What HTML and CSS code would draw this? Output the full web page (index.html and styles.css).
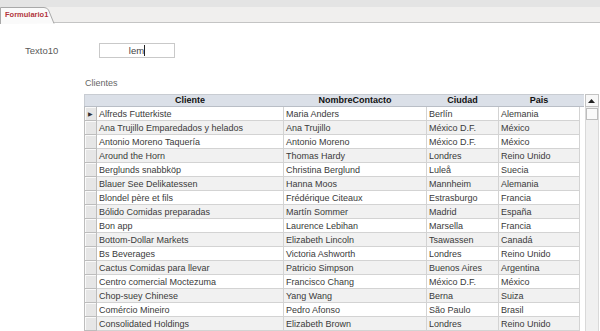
FILE: index.html
```html
<!DOCTYPE html>
<html lang="es">
<head>
    <meta charset="UTF-8">
    <title>Formulario1</title>
    <link rel="stylesheet" href="styles.css">
</head>
<body>

    <div class="top-band"></div>
    <div class="tab-strip">
        <div class="tab">
            <svg class="tab-shape" width="56" height="17" viewBox="0 0 56 17">
                <path d="M0.5 17 V0.5 H44 Q47 0.5 48.5 3 L54 16.5" fill="#fafafa" stroke="#a9a9a9"/>
            </svg>
            <span class="tab-title">Formulario1</span>
        </div>
    </div>

    <div class="form-body">
        <div class="field-row">
            <label for="texto10">Texto10</label>
            <div class="text-box" id="texto10">lem<span class="caret"></span></div>
        </div>

        <div class="sub-title">Clientes</div>

        <div class="datasheet">
            <table class="grid">
                <colgroup>
                    <col class="c-sel">
                    <col class="c-cliente">
                    <col class="c-contacto">
                    <col class="c-ciudad">
                    <col class="c-pais">
                    <col class="c-pad">
                </colgroup>
                <thead>
                    <tr>
                        <th></th>
                        <th>Cliente</th>
                        <th>NombreContacto</th>
                        <th>Ciudad</th>
                        <th>Pais</th>
                        <th></th>
                    </tr>
                </thead>
                <tbody>
                    <tr><td class="sel current">&#9654;</td><td>Alfreds Futterkiste</td><td>Maria Anders</td><td>Berlín</td><td>Alemania</td><td class="pad"></td></tr>
                    <tr><td class="sel"></td><td>Ana Trujillo Emparedados y helados</td><td>Ana Trujillo</td><td>México D.F.</td><td>México</td><td class="pad"></td></tr>
                    <tr><td class="sel"></td><td>Antonio Moreno Taquería</td><td>Antonio Moreno</td><td>México D.F.</td><td>México</td><td class="pad"></td></tr>
                    <tr><td class="sel"></td><td>Around the Horn</td><td>Thomas Hardy</td><td>Londres</td><td>Reino Unido</td><td class="pad"></td></tr>
                    <tr><td class="sel"></td><td>Berglunds snabbköp</td><td>Christina Berglund</td><td>Luleå</td><td>Suecia</td><td class="pad"></td></tr>
                    <tr><td class="sel"></td><td>Blauer See Delikatessen</td><td>Hanna Moos</td><td>Mannheim</td><td>Alemania</td><td class="pad"></td></tr>
                    <tr><td class="sel"></td><td>Blondel père et fils</td><td>Frédérique Citeaux</td><td>Estrasburgo</td><td>Francia</td><td class="pad"></td></tr>
                    <tr><td class="sel"></td><td>Bólido Comidas preparadas</td><td>Martín Sommer</td><td>Madrid</td><td>España</td><td class="pad"></td></tr>
                    <tr><td class="sel"></td><td>Bon app</td><td>Laurence Lebihan</td><td>Marsella</td><td>Francia</td><td class="pad"></td></tr>
                    <tr><td class="sel"></td><td>Bottom-Dollar Markets</td><td>Elizabeth Lincoln</td><td>Tsawassen</td><td>Canadá</td><td class="pad"></td></tr>
                    <tr><td class="sel"></td><td>Bs Beverages</td><td>Victoria Ashworth</td><td>Londres</td><td>Reino Unido</td><td class="pad"></td></tr>
                    <tr><td class="sel"></td><td>Cactus Comidas para llevar</td><td>Patricio Simpson</td><td>Buenos Aires</td><td>Argentina</td><td class="pad"></td></tr>
                    <tr><td class="sel"></td><td>Centro comercial Moctezuma</td><td>Francisco Chang</td><td>México D.F.</td><td>México</td><td class="pad"></td></tr>
                    <tr><td class="sel"></td><td>Chop-suey Chinese</td><td>Yang Wang</td><td>Berna</td><td>Suiza</td><td class="pad"></td></tr>
                    <tr><td class="sel"></td><td>Comércio Mineiro</td><td>Pedro Afonso</td><td>São Paulo</td><td>Brasil</td><td class="pad"></td></tr>
                    <tr><td class="sel"></td><td>Consolidated Holdings</td><td>Elizabeth Brown</td><td>Londres</td><td>Reino Unido</td><td class="pad"></td></tr>
                    <tr><td class="sel"></td><td></td><td></td><td></td><td></td><td class="pad"></td></tr>
                </tbody>
            </table>

            <div class="scrollbar">
                <div class="scroll-btn">
                    <svg width="7" height="4" viewBox="0 0 7 4"><path d="M0 4 L3.5 0 L7 4 Z" fill="#222"/></svg>
                </div>
                <div class="scroll-track">
                    <div class="scroll-thumb"></div>
                </div>
            </div>
        </div>
    </div>

</body>
</html>
```

FILE: styles.css
```css
body {
    margin: 0;
    font-family: 'Liberation Sans', Arial, sans-serif;
    background-color: #fff;
    color: #333;
    overflow: hidden;
}

.top-band {
    height: 7px;
    background-color: #e4e4e4;
}

/* Document tab strip */
.tab-strip {
    height: 15px;
    background-color: #f0efee;
    border-bottom: 1px solid #c4c4c4;
    display: flex;
    align-items: flex-end;
}

.tab {
    position: relative;
    width: 56px;
    height: 16px;
    margin-bottom: -1px;
}

.tab-shape {
    position: absolute;
    left: 0;
    top: 0;
}

.tab-title {
    position: relative;
    display: block;
    padding: 3px 0 0 5px;
    font-size: 7.5px;
    font-weight: bold;
    color: #b2353d;
    line-height: 10px;
}

.form-body {
    padding-top: 20px;
}

.field-row {
    display: flex;
    align-items: center;
    height: 15px;
    padding-left: 25px;
}

.field-row label {
    width: 74px;
    font-size: 9.5px;
    color: #5a5a5a;
}

.text-box {
    width: 74px;
    height: 13px;
    border: 1px solid #c9c9c9;
    font-size: 9.5px;
    line-height: 13px;
    color: #444;
    text-align: center;
}

.caret {
    display: inline-block;
    width: 1px;
    height: 11px;
    background-color: #222;
    vertical-align: -2px;
}

.sub-title {
    margin: 20px 0 0 85px;
    font-size: 9px;
    line-height: 11px;
    color: #666;
}

/* Datasheet */
.datasheet {
    display: flex;
    margin: 5px 0 0 84px;
}

.grid {
    width: 499px;
    table-layout: fixed;
    border-collapse: collapse;
    font-size: 9px;
}

.c-sel { width: 12px; }
.c-cliente { width: 187px; }
.c-contacto { width: 143px; }
.c-ciudad { width: 72px; }
.c-pais { width: 81px; }
.c-pad { width: 4px; }

.grid th {
    height: 11px;
    padding: 0;
    background-color: #dbe0e8;
    border-top: 1px solid #c8ccd2;
    border-bottom: 1px solid #b9bec6;
    font-weight: bold;
    color: #111;
    line-height: 11px;
    text-align: center;
}

.grid th:first-child {
    border-left: 1px solid #c8ccd2;
}

.grid tbody tr {
    height: 14px;
}

.grid tbody tr:nth-child(even) td {
    background-color: #f1f1f1;
}

.grid td {
    padding: 0 2px;
    border: 1px solid #d3d3d3;
    line-height: 12px;
    color: #3a3a3a;
    white-space: nowrap;
    overflow: hidden;
}

.grid tbody tr:nth-child(even) td.pad,
.grid td.pad {
    background-color: #fff;
    border-top: none;
    border-bottom: none;
    border-right: none;
}

.grid td.sel,
.grid tbody tr:nth-child(even) td.sel {
    padding: 0;
    background-color: #e6e6e6;
    border: 1px solid #bdbdbd;
    box-shadow: inset 1px 1px 0 #fafafa;
    font-size: 6px;
    color: #333;
    text-align: center;
}

.scrollbar {
    width: 14px;
    margin-left: 1px;
    display: flex;
    flex-direction: column;
}

.scroll-btn {
    height: 11px;
    border: 1px solid #c3c3c3;
    background-color: #f7f7f7;
    display: flex;
    align-items: center;
    justify-content: center;
}

.scroll-track {
    flex: 1;
    background-color: #f0f0f0;
    border-left: 1px solid #d9d9d9;
    border-right: 1px solid #d9d9d9;
    padding-top: 1px;
}

.scroll-thumb {
    height: 10px;
    border: 1px solid #bdbdbd;
    background-color: #fafafa;
}
```
